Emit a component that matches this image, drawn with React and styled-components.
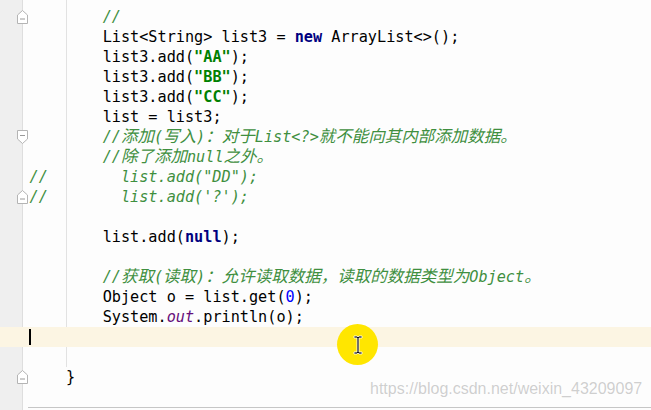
import React from 'react';
import styled, { createGlobalStyle, css } from 'styled-components';

// IDE editor snippet with a highlighted caret line

const GlobalStyle = createGlobalStyle`
  html, body {
    margin: 0;
    padding: 0;
    background: #fdfdfd;
  }
`;

const lines = [
  { indent: 8, tokens: [['c', '//']], fold: 'end' },
  { indent: 8, tokens: [['p', 'List<String> list3 = '], ['k', 'new'], ['p', ' ArrayList<>();']] },
  { indent: 8, tokens: [['p', 'list3.add('], ['s', '"AA"'], ['p', ');']] },
  { indent: 8, tokens: [['p', 'list3.add('], ['s', '"BB"'], ['p', ');']] },
  { indent: 8, tokens: [['p', 'list3.add('], ['s', '"CC"'], ['p', ');']] },
  { indent: 8, tokens: [['p', 'list = list3;']] },
  { indent: 8, tokens: [['c', '//添加(写入)：对于List<?>就不能向其内部添加数据。']], fold: 'start' },
  { indent: 8, tokens: [['c', '//除了添加null之外。']] },
  { indent: 0, tokens: [['c', '//        list.add("DD");']] },
  { indent: 0, tokens: [['c', '//        list.add(\'?\');']], fold: 'end' },
  { indent: 0, tokens: [] },
  { indent: 8, tokens: [['p', 'list.add('], ['k', 'null'], ['p', ');']] },
  { indent: 0, tokens: [] },
  { indent: 8, tokens: [['c', '//获取(读取)：允许读取数据，读取的数据类型为Object。']] },
  { indent: 8, tokens: [['p', 'Object o = list.get('], ['n', '0'], ['p', ');']] },
  { indent: 8, tokens: [['p', 'System.'], ['f', 'out'], ['p', '.println(o);']] },
  { indent: 0, tokens: [], current: true },
  { indent: 0, tokens: [] },
  { indent: 4, tokens: [['p', '}']], fold: 'end' },
];

const CJK_RE = /([\u2E80-\u9FFF\u3000-\u303F\uFF00-\uFFEF]+)/;

const Chunk = ({ text }) =>
  text.split(CJK_RE).map((part, i) =>
    CJK_RE.test(part) ? <Cjk key={i}>{part}</Cjk> : part
  );

const FoldMarker = ({ dir }) => (
  <FoldIcon width="11" height="14" viewBox="0 0 11 14">
    {dir === 'end' ? (
      <path d="M0.5 13.5 V5 L5.5 0.5 L10.5 5 V13.5 Z" fill="#fff" stroke="#b4b4b4" />
    ) : (
      <path d="M0.5 0.5 V9 L5.5 13.5 L10.5 9 V0.5 Z" fill="#fff" stroke="#b4b4b4" />
    )}
    <line x1="3" x2="8" y1={dir === 'end' ? 9 : 5.5} y2={dir === 'end' ? 9 : 5.5} stroke="#9a9a9a" />
  </FoldIcon>
);

const App = () => {
  return (
    <>
      <GlobalStyle />
      <Editor>
        <IndentGuide />
        {lines.map((line, i) => (
          <Row key={i} current={line.current}>
            <Gutter>{line.fold && <FoldMarker dir={line.fold} />}</Gutter>
            <Code>
              {line.current && <Caret />}
              {' '.repeat(line.indent)}
              {line.tokens.map(([type, text], j) => (
                <Token key={j} kind={type}>
                  <Chunk text={text} />
                </Token>
              ))}
            </Code>
          </Row>
        ))}
        <BottomRule />
        <Pointer>
          <svg width="10" height="20" viewBox="0 0 10 20">
            <path
              d="M1 1 H4 L5 2 L6 1 H9 V3 H6 V17 H9 V19 H6 L5 18 L4 19 H1 V17 H4 V3 H1 Z"
              fill="#111"
              stroke="#fff"
              strokeWidth="0.8"
            />
          </svg>
        </Pointer>
        <Watermark>https://blog.csdn.net/weixin_43209097</Watermark>
      </Editor>
    </>
  );
};

const Editor = styled.div`
  position: relative;
  height: 410px;
  overflow: hidden;
  display: flex;
  flex-direction: column;
  padding-top: 7px;
  box-sizing: border-box;
  background: linear-gradient(
    to right,
    #efefef 0 22px,
    #dedede 22px 23px,
    #fdfdfd 23px
  );
`;

const IndentGuide = styled.div`
  position: absolute;
  left: 66px;
  top: 0;
  width: 1px;
  height: 367px;
  background: #e2e2e2;
`;

const Row = styled.div`
  display: flex;
  height: 20px;
  position: relative;
  background: ${({ current }) => (current ? '#fcf5e3' : 'transparent')};
`;

const Gutter = styled.div`
  flex: 0 0 23px;
  position: relative;
`;

const FoldIcon = styled.svg`
  position: absolute;
  right: -5px;
  top: 3px;
  display: block;
`;

const Code = styled.div`
  position: relative;
  padding-left: 6.5px;
  white-space: pre;
  font-family: 'DejaVu Sans Mono', 'Noto Sans CJK SC', monospace;
  font-size: 15.2px;
  line-height: 20px;
  color: #000;
`;

const Caret = styled.span`
  position: absolute;
  left: 6px;
  top: 2px;
  width: 2px;
  height: 16px;
  background: #000;
`;

const tokenStyles = {
  p: css``,
  k: css`
    color: #000080;
    font-weight: bold;
  `,
  s: css`
    color: #008000;
    font-weight: bold;
  `,
  n: css`
    color: #0000ff;
  `,
  f: css`
    color: #660e7a;
    font-style: italic;
  `,
  c: css`
    color: #3f8f3f;
    font-style: italic;
  `,
};

const Token = styled.span`
  ${({ kind }) => tokenStyles[kind]}
`;

const Cjk = styled.span`
  font-family: 'Noto Sans CJK SC', sans-serif;
  font-size: 16.5px;
  line-height: 1;
`;

const BottomRule = styled.div`
  margin-top: auto;
  margin-left: 28px;
  margin-bottom: 2px;
  height: 1px;
  background: #c6c6c6;
`;

const Pointer = styled.div`
  position: absolute;
  left: 337px;
  top: 324px;
  width: 41px;
  height: 41px;
  border-radius: 50%;
  background: #ffe600;
  display: flex;
  align-items: center;
  justify-content: center;
`;

const Watermark = styled.div`
  position: absolute;
  left: 370px;
  top: 379px;
  font-family: 'Liberation Sans', Arial, sans-serif;
  font-size: 16px;
  line-height: 20px;
  color: rgba(150, 150, 150, 0.45);
  white-space: nowrap;
`;

export default App;
